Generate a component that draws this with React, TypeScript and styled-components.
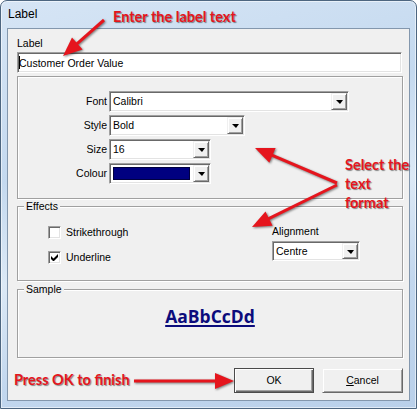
import React from "react";
import styled, { createGlobalStyle } from "styled-components";

const GlobalStyle = createGlobalStyle`
  html, body {
    margin: 0;
    padding: 0;
    background: #ffffff;
  }
  body {
    font-family: "Liberation Sans", Arial, sans-serif;
    font-size: 10.5px;
    color: #000;
  }
`;

const Window = styled.div`
  position: relative;
  width: 417px;
  height: 409px;
  box-sizing: border-box;
  padding: 0 6px 7px 6px;
  display: flex;
  flex-direction: column;
  border: 1px solid #4d6680;
  border-radius: 7px 7px 0 0;
  background: linear-gradient(
    165deg,
    #d6e5f5 0%,
    #c4d9ef 35%,
    #dce9f6 55%,
    #c2d7ee 75%,
    #b9d0ea 100%
  );
  box-shadow: inset 0 0 0 1px rgba(255, 255, 255, 0.55);
  overflow: hidden;
`;

const TitleBar = styled.div`
  height: 27px;
  box-sizing: border-box;
  padding: 6px 0 0 1px;
  font-size: 12px;
  line-height: 14px;
  color: #000;
`;

const Client = styled.div`
  flex: 1;
  display: flex;
  flex-direction: column;
  box-sizing: border-box;
  padding: 8px 6px 0 9px;
  background: #f0f0f0;
  border: 1px solid #8397ad;
`;

const FieldCaption = styled.div`
  line-height: 13px;
  height: 13px;
`;

const EditBox = styled.div`
  margin: 2px 1px 0 0;
  height: 21px;
  box-sizing: border-box;
  display: flex;
  align-items: center;
  background: #fff;
  border-top: 1px solid #a0a0a0;
  border-left: 1px solid #a0a0a0;
  border-bottom: 1px solid #fff;
  border-right: 1px solid #fff;
  box-shadow: inset 1px 1px 0 #696969, inset -1px -1px 0 #e3e3e3;
  padding-left: 1px;
`;

const Caret = styled.span`
  display: inline-block;
  width: 1px;
  height: 13px;
  background: #000;
  margin-right: -1px;
`;

const FormatBox = styled.div`
  margin-top: 3px;
  height: 123px;
  box-sizing: border-box;
  border: 1px solid #a0a0a0;
  box-shadow: inset 1px 1px 0 #fff, 1px 1px 0 #fff;
  padding-top: 14px;
`;

const FormatGrid = styled.div`
  display: grid;
  grid-template-columns: 89px auto;
  grid-auto-rows: 21px;
  column-gap: 2px;
  row-gap: 3px;
  align-items: center;
`;

const RowLabel = styled.div`
  text-align: right;
  line-height: 13px;
`;

const Combo = styled.div<{ $w: number; $h?: number }>`
  width: ${(p) => p.$w}px;
  height: ${(p) => p.$h ?? 21}px;
  box-sizing: border-box;
  display: flex;
  align-items: stretch;
  background: #fff;
  border-top: 1px solid #a0a0a0;
  border-left: 1px solid #a0a0a0;
  border-bottom: 1px solid #fff;
  border-right: 1px solid #fff;
  box-shadow: inset 1px 1px 0 #696969, inset -1px -1px 0 #e3e3e3;
  padding: 1px;
`;

const ComboText = styled.div`
  flex: 1;
  display: flex;
  align-items: center;
  padding-left: 2px;
  line-height: 13px;
`;

const Swatch = styled.div<{ $color: string }>`
  flex: 1;
  margin: 2px 3px 2px 2px;
  background: ${(p) => p.$color};
  border: 1px solid #000040;
`;

const DropButton = styled.div`
  width: 16px;
  box-sizing: border-box;
  display: flex;
  align-items: center;
  justify-content: center;
  background: #f0f0f0;
  border-top: 1px solid #f0f0f0;
  border-left: 1px solid #f0f0f0;
  border-bottom: 1px solid #696969;
  border-right: 1px solid #696969;
  box-shadow: inset 1px 1px 0 #fff, inset -1px -1px 0 #a0a0a0;
`;

const Triangle = styled.span`
  width: 0;
  height: 0;
  border-left: 4px solid transparent;
  border-right: 3px solid transparent;
  border-top: 4px solid #000;
  margin-top: 1px;
`;

const Group = styled.div<{ $h: number; $mt: number }>`
  position: relative;
  margin-top: ${(p) => p.$mt}px;
  height: ${(p) => p.$h}px;
  box-sizing: border-box;
  border: 1px solid #a0a0a0;
  box-shadow: inset 1px 1px 0 #fff, 1px 1px 0 #fff;
`;

const GroupCaption = styled.span`
  position: absolute;
  left: 6px;
  top: -7px;
  padding: 0 2px;
  line-height: 13px;
  background: #f0f0f0;
`;

const EffectsGrid = styled.div`
  display: grid;
  grid-template-columns: 224px auto;
  padding-left: 30px;
`;

const CheckColumn = styled.div`
  display: flex;
  flex-direction: column;
  gap: 12px;
  padding-top: 19px;
`;

const CheckRow = styled.div`
  display: flex;
  align-items: center;
  gap: 5px;
  height: 13px;
  line-height: 13px;
`;

const CheckBox = styled.span`
  width: 13px;
  height: 13px;
  box-sizing: border-box;
  display: flex;
  align-items: center;
  justify-content: center;
  background: #fff;
  border-top: 1px solid #a0a0a0;
  border-left: 1px solid #a0a0a0;
  border-bottom: 1px solid #fff;
  border-right: 1px solid #fff;
  box-shadow: inset 1px 1px 0 #696969, inset -1px -1px 0 #e3e3e3;
`;

const AlignColumn = styled.div`
  display: flex;
  flex-direction: column;
  gap: 3px;
  padding-top: 18px;
  line-height: 13px;
`;

const SampleArea = styled.div`
  display: flex;
  justify-content: center;
  padding-top: 15px;
`;

const SampleText = styled.span`
  font-family: "Open Sans", "Liberation Sans", sans-serif;
  font-weight: 700;
  font-size: 17.5px;
  line-height: 22px;
  color: #0c0c7c;
  text-decoration: underline;
  text-decoration-thickness: 2px;
  text-underline-offset: 2px;
`;

const ButtonRow = styled.div`
  margin-top: 10px;
  display: flex;
  justify-content: flex-end;
  gap: 8px;
`;

const Button = styled.div<{ $w: number; $default?: boolean }>`
  width: ${(p) => p.$w}px;
  height: 25px;
  box-sizing: border-box;
  display: flex;
  align-items: center;
  justify-content: center;
  background: #f0f0f0;
  line-height: 13px;
  border: 1px solid ${(p) => (p.$default ? "#4b4b4b" : "#f0f0f0")};
  border-right-color: ${(p) => (p.$default ? "#4b4b4b" : "#696969")};
  border-bottom-color: ${(p) => (p.$default ? "#4b4b4b" : "#696969")};
  box-shadow: ${(p) =>
    p.$default
      ? "inset 1px 1px 0 #fff, inset -1px -1px 0 #696969, inset -2px -2px 0 #a0a0a0"
      : "inset 1px 1px 0 #fff, inset -1px -1px 0 #a0a0a0"};
`;

const Overlay = styled.div`
  position: absolute;
  inset: 0;
  pointer-events: none;
`;

const ArrowLayer = styled.svg`
  position: absolute;
  left: 0;
  top: 0;
  filter: drop-shadow(1px 1px 1px rgba(0, 0, 0, 0.5));
`;

const Callout = styled.div<{ $x: number; $y: number }>`
  position: absolute;
  left: ${(p) => p.$x}px;
  top: ${(p) => p.$y}px;
  font-family: Lato, "Open Sans", sans-serif;
  font-weight: 700;
  font-size: 14.5px;
  line-height: 19px;
  color: #e5151d;
  white-space: nowrap;
  text-shadow: 1px 1px 1px rgba(0, 0, 0, 0.45);
`;

type Pt = [number, number];

const arrows: { tail: Pt; tip: Pt }[] = [
  { tail: [103, 19], tip: [62, 55] },
  { tail: [336, 182], tip: [254, 147] },
  { tail: [336, 184], tip: [251, 226] },
  { tail: [133, 380], tip: [233, 380] },
];

function Arrow({ tail, tip }: { tail: Pt; tip: Pt }) {
  const dx = tip[0] - tail[0];
  const dy = tip[1] - tail[1];
  const d = Math.hypot(dx, dy);
  const ux = dx / d;
  const uy = dy / d;
  const len = 19;
  const half = 8;
  const bx = tip[0] - ux * len;
  const by = tip[1] - uy * len;
  const px = -uy;
  const py = ux;
  const head = `${tip[0]},${tip[1]} ${bx + px * half},${by + py * half} ${bx - px * half},${by - py * half}`;
  return (
    <g>
      <line
        x1={tail[0]}
        y1={tail[1]}
        x2={bx + ux * 2}
        y2={by + uy * 2}
        stroke="#e5151d"
        strokeWidth={3}
      />
      <polygon points={head} fill="#e5151d" />
    </g>
  );
}

function Check() {
  return (
    <svg width="7" height="7" viewBox="0 0 7 7">
      <path d="M0 2v3l2 2h1l4-4V0L2.5 4.5z" fill="#000" />
    </svg>
  );
}

export default function App() {
  return (
    <>
      <GlobalStyle />
      <Window>
        <TitleBar>Label</TitleBar>
        <Client>
          <FieldCaption>Label</FieldCaption>
          <EditBox>
            <Caret />
            Customer Order Value
          </EditBox>

          <FormatBox>
            <FormatGrid>
              <RowLabel>Font</RowLabel>
              <Combo $w={240}>
                <ComboText>Calibri</ComboText>
                <DropButton>
                  <Triangle />
                </DropButton>
              </Combo>
              <RowLabel>Style</RowLabel>
              <Combo $w={136}>
                <ComboText>Bold</ComboText>
                <DropButton>
                  <Triangle />
                </DropButton>
              </Combo>
              <RowLabel>Size</RowLabel>
              <Combo $w={102}>
                <ComboText>16</ComboText>
                <DropButton>
                  <Triangle />
                </DropButton>
              </Combo>
              <RowLabel>Colour</RowLabel>
              <Combo $w={102}>
                <Swatch $color="#000080" />
                <DropButton>
                  <Triangle />
                </DropButton>
              </Combo>
            </FormatGrid>
          </FormatBox>

          <Group $h={75} $mt={7}>
            <GroupCaption>Effects</GroupCaption>
            <EffectsGrid>
              <CheckColumn>
                <CheckRow>
                  <CheckBox />
                  Strikethrough
                </CheckRow>
                <CheckRow>
                  <CheckBox>
                    <Check />
                  </CheckBox>
                  Underline
                </CheckRow>
              </CheckColumn>
              <AlignColumn>
                Alignment
                <Combo $w={88} $h={20}>
                  <ComboText>Centre</ComboText>
                  <DropButton>
                    <Triangle />
                  </DropButton>
                </Combo>
              </AlignColumn>
            </EffectsGrid>
          </Group>

          <Group $h={69} $mt={8}>
            <GroupCaption>Sample</GroupCaption>
            <SampleArea>
              <SampleText>AaBbCcDd</SampleText>
            </SampleArea>
          </Group>

          <ButtonRow>
            <Button $w={80} $default>
              OK
            </Button>
            <Button $w={81}>
              <span>
                <u>C</u>ancel
              </span>
            </Button>
          </ButtonRow>
        </Client>

        <Overlay>
          <ArrowLayer width="417" height="409" viewBox="0 0 417 409">
            {arrows.map((a, i) => (
              <Arrow key={i} tail={a.tail} tip={a.tip} />
            ))}
          </ArrowLayer>
          <Callout $x={112} $y={6}>
            Enter the label text
          </Callout>
          <Callout $x={344} $y={154}>
            Select the
            <br />
            text
            <br />
            format
          </Callout>
          <Callout $x={13} $y={369}>
            Press OK to finish
          </Callout>
        </Overlay>
      </Window>
    </>
  );
}
